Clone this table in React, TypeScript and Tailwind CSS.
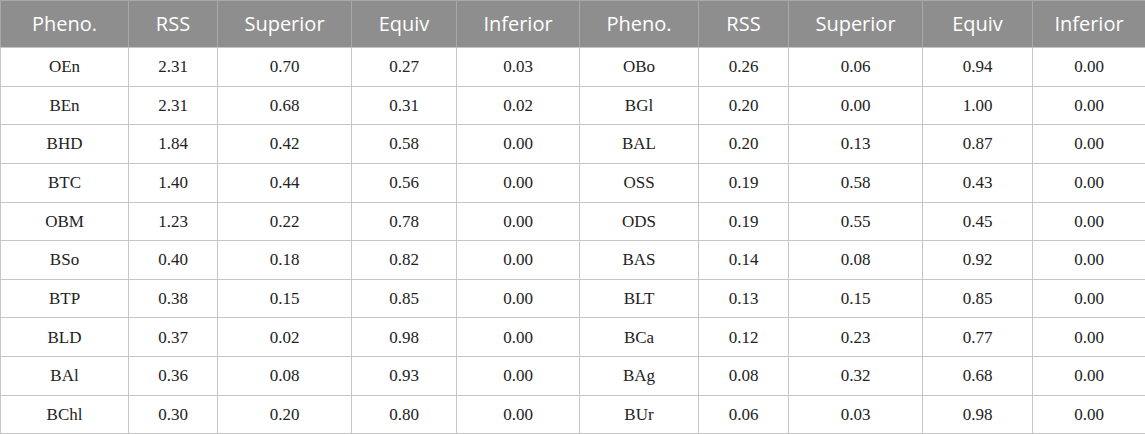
import React from "react";

const headers = ["Pheno.", "RSS", "Superior", "Equiv", "Inferior", "Pheno.", "RSS", "Superior", "Equiv", "Inferior"];

const widths = ["w-[128px]", "w-[89px]", "w-[134px]", "w-[105px]", "w-[123px]", "w-[119px]", "w-[90px]", "w-[134px]", "w-[110px]", "w-[113px]"];

const rows = [
    ["OEn", "2.31", "0.70", "0.27", "0.03", "OBo", "0.26", "0.06", "0.94", "0.00"],
    ["BEn", "2.31", "0.68", "0.31", "0.02", "BGl", "0.20", "0.00", "1.00", "0.00"],
    ["BHD", "1.84", "0.42", "0.58", "0.00", "BAL", "0.20", "0.13", "0.87", "0.00"],
    ["BTC", "1.40", "0.44", "0.56", "0.00", "OSS", "0.19", "0.58", "0.43", "0.00"],
    ["OBM", "1.23", "0.22", "0.78", "0.00", "ODS", "0.19", "0.55", "0.45", "0.00"],
    ["BSo", "0.40", "0.18", "0.82", "0.00", "BAS", "0.14", "0.08", "0.92", "0.00"],
    ["BTP", "0.38", "0.15", "0.85", "0.00", "BLT", "0.13", "0.15", "0.85", "0.00"],
    ["BLD", "0.37", "0.02", "0.98", "0.00", "BCa", "0.12", "0.23", "0.77", "0.00"],
    ["BAl", "0.36", "0.08", "0.93", "0.00", "BAg", "0.08", "0.32", "0.68", "0.00"],
    ["BChl", "0.30", "0.20", "0.80", "0.00", "BUr", "0.06", "0.03", "0.98", "0.00"],
];

const App = () => {
    return (
        <div className="w-[1145px] bg-white">
            <table className="w-[1145px] table-fixed border-collapse">
                <thead>
                    <tr className="h-[47px] bg-[#8e8e8e]">
                        {headers.map((h, i) => (
                            <th
                                key={i}
                                className={`${widths[i]} border border-[#a9a9a9] border-b-[#c6c6c6] text-center text-[20px] font-normal text-white font-['Open_Sans',sans-serif]`}
                            >
                                {h}
                            </th>
                        ))}
                    </tr>
                </thead>
                <tbody>
                    {rows.map((row, r) => (
                        <tr key={r} className="h-[38.65px]">
                            {row.map((cell, c) => (
                                <td
                                    key={c}
                                    className="border border-[#c6c6c6] text-center text-[17px] text-[#222] font-['Liberation_Serif',serif]"
                                >
                                    {cell}
                                </td>
                            ))}
                        </tr>
                    ))}
                </tbody>
            </table>
        </div>
    );
};

export default App;
